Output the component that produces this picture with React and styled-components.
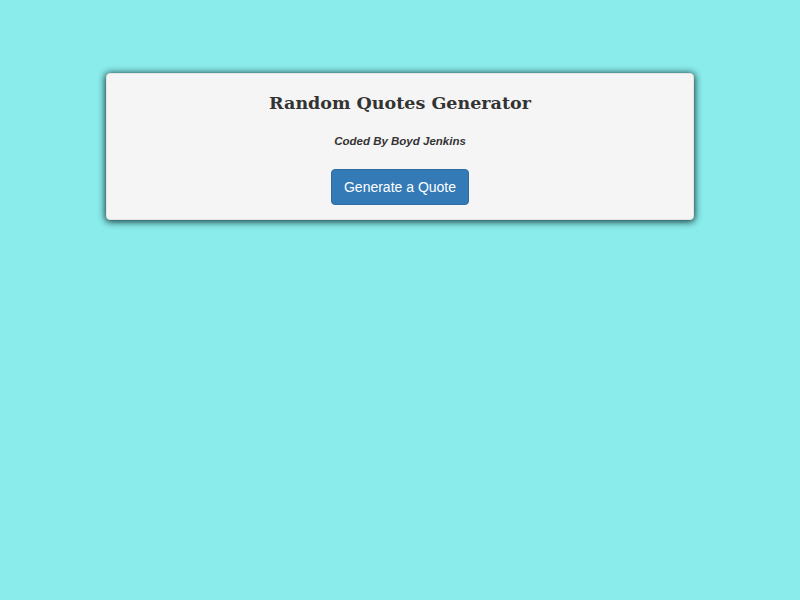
import React from "react";
import styled, { createGlobalStyle } from "styled-components";

const GlobalStyle = createGlobalStyle`
  html, body {
    margin: 0;
    padding: 0;
    background-color: #8aeceb;
    font-family: "Liberation Sans", Arial, sans-serif;
    color: #333;
  }
`;

const Page = styled.div`
  min-height: 600px;
  padding-top: 73px;
  box-sizing: border-box;
`;

const Well = styled.div`
  width: 588px;
  margin: 0 auto;
  box-sizing: border-box;
  background-color: #f5f5f5;
  border: 1px solid #e3e3e3;
  border-radius: 4px;
  box-shadow: 0 1px 7px 1px rgba(0, 30, 30, 0.85);
  padding: 17px 19px 14px;
  display: flex;
  flex-direction: column;
  align-items: center;
`;

const Title = styled.h1`
  margin: 0;
  font-family: "DejaVu Serif", "Liberation Serif", serif;
  font-weight: bold;
  font-size: 17.5px;
  line-height: 24px;
  color: #333;
`;

const Byline = styled.p`
  margin: 17px 0 0;
  font-size: 11.5px;
  line-height: 18px;
  font-weight: bold;
  font-style: italic;
  color: #333;
`;

const Button = styled.button`
  margin-top: 19px;
  height: 36px;
  padding: 0 12px;
  font-family: "Liberation Sans", Arial, sans-serif;
  font-size: 14px;
  color: #fff;
  background-color: #337ab7;
  border: 1px solid #2e6da4;
  border-radius: 4px;
  cursor: pointer;
`;

function App() {
  return (
    <Page>
      <GlobalStyle />
      <Well>
        <Title>Random Quotes Generator</Title>
        <Byline>Coded By Boyd Jenkins</Byline>
        <Button>Generate a Quote</Button>
      </Well>
    </Page>
  );
}

export default App;
